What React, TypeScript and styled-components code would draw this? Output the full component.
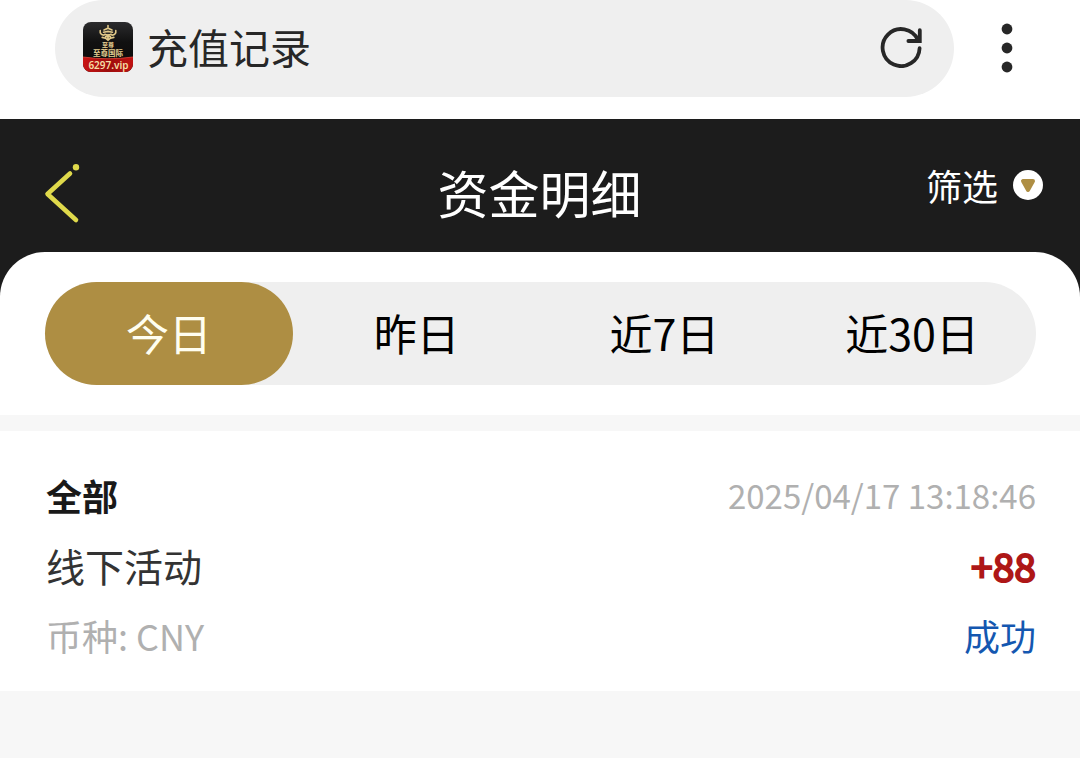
import React, { useState } from 'react';
import styled, { createGlobalStyle } from 'styled-components';

const GlobalStyle = createGlobalStyle`
  *, *::before, *::after { box-sizing: border-box; }
  body {
    margin: 0;
    background: #f7f7f7;
    font-family: "Noto Sans CJK SC", "Noto Sans", sans-serif;
  }
  button {
    margin: 0;
    padding: 0;
    border: 0;
    background: none;
    color: inherit;
    font-family: inherit;
    cursor: pointer;
  }
  h1, h2, p { margin: 0; font-weight: 400; }
  svg { display: block; }
`;

const BrowserBar = styled.header`
  display: flex;
  align-items: center;
  padding: 0 49px 22px 55px;
  background: #fff;
`;

const AddressPill = styled.div`
  flex: 1;
  display: flex;
  align-items: center;
  height: 97px;
  padding: 0 32px 4px 28px;
  border-radius: 49px;
  background: #efefef;
`;

const PageName = styled.span`
  flex: 1;
  margin-left: 14px;
  padding-bottom: 2px;
  color: #272727;
  font-size: 41px;
  line-height: 60px;
`;

const MenuButton = styled.button`
  display: flex;
  justify-content: center;
  width: 48px;
  margin-left: 29px;
  padding-bottom: 2px;
`;

const TitleBar = styled.div`
  display: grid;
  grid-template-columns: 1fr auto 1fr;
  align-items: center;
  height: 133px;
  padding: 12px 37px 0 36px;
  background: #1c1c1c;
  color: #fff;
`;

const BackButton = styled.button`
  justify-self: start;
`;

const Title = styled.h1`
  font-size: 51px;
  line-height: 74px;
`;

const FilterButton = styled.button`
  display: flex;
  align-items: center;
  justify-self: end;
  gap: 15px;
  padding-bottom: 14px;
  font-size: 36px;
  line-height: 52px;
`;

const CardBackdrop = styled.div`
  background: #1c1c1c;
`;

const TabCard = styled.section`
  padding: 30px 44px 30px 45px;
  border-radius: 45px 45px 0 0;
  background: #fff;
`;

const Tabs = styled.div`
  display: flex;
  border-radius: 52px;
  background: #efefef;
`;

const Tab = styled.button<{ $active: boolean }>`
  flex: 1;
  height: 103px;
  padding-bottom: 4px;
  border-radius: 52px;
  background: ${({ $active }) => ($active ? '#ae8e43' : 'transparent')};
  color: ${({ $active }) => ($active ? '#fffef0' : '#000')};
  font-size: 43px;
  line-height: 62px;
`;

const Record = styled.article`
  margin-top: 16px;
  padding: 29px 44px 21px 46px;
  background: #fff;
`;

const RecordRow = styled.div`
  display: flex;
  align-items: center;
  justify-content: space-between;
  height: 70px;
`;

const Category = styled.h2`
  color: #191919;
  font-size: 36px;
  font-weight: 700;
`;

const Time = styled.time`
  color: #b0b0b0;
  font-size: 33px;
`;

const Activity = styled.p`
  color: #333;
  font-size: 39px;
`;

const Amount = styled.strong`
  color: #ae1717;
  font-size: 39px;
  font-weight: 400;
  -webkit-text-stroke: 2px #ae1717;
`;

const Currency = styled.p`
  color: #b0b0b0;
  font-size: 36px;
`;

const Status = styled.span`
  color: #1457b0;
  font-size: 36px;
`;

const SiteIcon = () => (
  <svg width="50" height="50" viewBox="0 0 50 50" aria-hidden="true">
    <defs>
      <clipPath id="site-clip"><rect width="50" height="50" rx="8" /></clipPath>
      <linearGradient id="site-black" x1="0" y1="0" x2="0" y2="1">
        <stop offset="0" stopColor="#2b2b2d" />
        <stop offset="0.4" stopColor="#111" />
        <stop offset="1" stopColor="#0a0808" />
      </linearGradient>
      <linearGradient id="site-red" x1="0" y1="0" x2="1" y2="0">
        <stop offset="0" stopColor="#c91414" />
        <stop offset="0.5" stopColor="#9c0d0d" />
        <stop offset="1" stopColor="#c01212" />
      </linearGradient>
    </defs>
    <g clipPath="url(#site-clip)">
      <rect width="50" height="50" fill="url(#site-black)" />
      <path d="M0 35Q25 38.5 50 35V50H0Z" fill="url(#site-red)" />
      <path d="M0 35Q25 38.5 50 35" fill="none" stroke="#e0453a" strokeWidth="0.8" />
      <g fill="none" stroke="#e0c888" strokeWidth="1.6" strokeLinecap="round">
        <path d="M25 3.6v1.6M21 8l4-1.8 4 1.8M17.2 8.5q-.6 4 3.8 4.6M32.8 8.5q.6 4-3.8 4.6M20.5 10.2l4.5-.8 4.5.8M22 12.2l2 .8M28 12.2l-2 .8M19.2 15.4l3.3.8 2.5 2 2.5-2 3.3-.8M22.5 14.6h5M25 12.6v5" />
      </g>
      <g fill="#e6cf92" fontFamily="Noto Sans CJK SC" fontWeight="700" textAnchor="middle">
        <text x="25" y="25" fontSize="6">至尊</text>
        <text x="25" y="34" fontSize="7.5">至尊国际</text>
      </g>
      <text x="25.5" y="47" fill="#f5dda5" fontFamily="Noto Sans" fontSize="10" fontWeight="600" textAnchor="middle">6297.vip</text>
    </g>
  </svg>
);

const RefreshIcon = () => (
  <svg width="42" height="42" viewBox="0 0 42 42" fill="none" stroke="#272727" strokeWidth="3.8" strokeLinecap="round" aria-hidden="true">
    <path d="M39.6 22.2A18.5 18.5 0 1 1 38 14" />
    <path d="M39.8 4.2V15H28.4" strokeLinejoin="miter" />
  </svg>
);

const MenuIcon = () => (
  <svg width="12" height="50" viewBox="0 0 12 50" fill="#272727" aria-hidden="true">
    <circle cx="6" cy="6" r="5.4" />
    <circle cx="6" cy="25" r="5.4" />
    <circle cx="6" cy="44" r="5.4" />
  </svg>
);

const BackIcon = () => (
  <svg width="48" height="64" viewBox="-4 0 48 64" aria-hidden="true">
    <path d="M30 13.5L7.5 34L36 60" fill="none" stroke="#dfd94b" strokeWidth="4.6" strokeLinecap="round" strokeLinejoin="round" />
    <circle cx="36" cy="7.3" r="3.2" fill="#dfd94b" />
  </svg>
);

const FilterIcon = () => (
  <svg width="30" height="30" viewBox="0 0 30 30" aria-hidden="true">
    <circle cx="15" cy="15" r="15" fill="#fff" />
    <path d="M10 11H20L15 20Z" fill="#ae8e43" stroke="#ae8e43" strokeWidth="4" strokeLinejoin="round" />
  </svg>
);

const ranges = ['今日', '昨日', '近7日', '近30日'];

export default function App() {
  const [range, setRange] = useState(ranges[0]);

  return (
    <>
      <GlobalStyle />
      <BrowserBar>
        <AddressPill>
          <SiteIcon />
          <PageName>充值记录</PageName>
          <button type="button" aria-label="刷新"><RefreshIcon /></button>
        </AddressPill>
        <MenuButton type="button" aria-label="菜单"><MenuIcon /></MenuButton>
      </BrowserBar>
      <main>
        <TitleBar>
          <BackButton type="button" aria-label="返回"><BackIcon /></BackButton>
          <Title>资金明细</Title>
          <FilterButton type="button">筛选<FilterIcon /></FilterButton>
        </TitleBar>
        <CardBackdrop>
          <TabCard>
            <Tabs role="tablist">
              {ranges.map((name) => (
                <Tab
                  key={name}
                  type="button"
                  role="tab"
                  aria-selected={name === range}
                  $active={name === range}
                  onClick={() => setRange(name)}
                >
                  {name}
                </Tab>
              ))}
            </Tabs>
          </TabCard>
        </CardBackdrop>
        <Record>
          <RecordRow>
            <Category>全部</Category>
            <Time dateTime="2025-04-17T13:18:46">2025/04/17 13:18:46</Time>
          </RecordRow>
          <RecordRow>
            <Activity>线下活动</Activity>
            <Amount>+88</Amount>
          </RecordRow>
          <RecordRow>
            <Currency>币种: CNY</Currency>
            <Status>成功</Status>
          </RecordRow>
        </Record>
      </main>
    </>
  );
}
